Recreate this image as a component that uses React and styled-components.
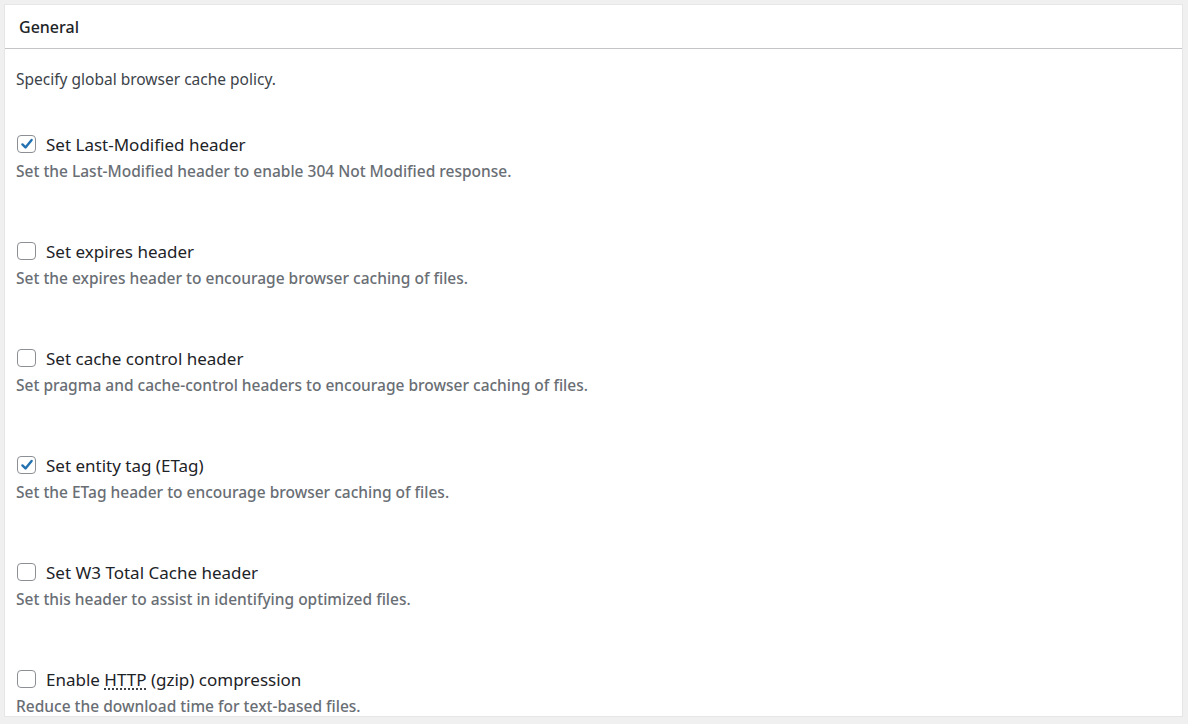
import React from "react";
import styled, { createGlobalStyle } from "styled-components";

const Global = createGlobalStyle`
  html, body {
    margin: 0;
    background: #f0f0f1;
  }
  body {
    font-family: "Noto Sans", "Open Sans", sans-serif;
  }
`;

const Page = styled.div`
  box-sizing: border-box;
  height: 724px;
  padding: 4px 5px 7px 4px;
`;

const Panel = styled.section`
  box-sizing: border-box;
  height: 100%;
  background: #fff;
  border: 1px solid #e6e6e6;
  overflow: hidden;
`;

const Header = styled.h2`
  box-sizing: border-box;
  margin: 0;
  height: 44px;
  padding: 0 0 0 14px;
  display: flex;
  align-items: center;
  font-size: 16px;
  font-weight: 500;
  color: #1d2327;
  border-bottom: 1px solid #c3c4c7;
`;

const Body = styled.div`
  padding: 20px 11px 0 11px;
`;

const Intro = styled.p`
  margin: 0 0 43px;
  font-size: 15.5px;
  line-height: 20px;
  color: #3c434a;
`;

const Option = styled.div`
  margin-bottom: 58px;
`;

const Label = styled.label`
  display: flex;
  align-items: center;
  gap: 10px;
  height: 24px;
  font-size: 17px;
  color: #1d2327;
`;

const Box = styled.span`
  box-sizing: border-box;
  width: 19px;
  height: 18px;
  border: 1px solid #8c8f94;
  border-radius: 4px;
  display: flex;
  align-items: center;
  justify-content: center;
  background: #fff;
  margin-left: 1px;
`;

const Desc = styled.p`
  margin: 5px 0 0;
  font-size: 15.5px;
  font-weight: 500;
  line-height: 20px;
  color: #696e74;
`;

const Abbr = styled.abbr`
  text-decoration: underline dotted;
  text-underline-offset: 3px;
`;

const Check = () => (
  <svg width="14" height="14" viewBox="0 0 14 14">
    <path d="M2.4 7.4 L5.5 10.4 L11.6 3" fill="none" stroke="#2271b1" strokeWidth="2.4" strokeLinecap="round" strokeLinejoin="round" />
  </svg>
);

const options = [
  { label: "Set Last-Modified header", desc: "Set the Last-Modified header to enable 304 Not Modified response.", checked: true },
  { label: "Set expires header", desc: "Set the expires header to encourage browser caching of files." },
  { label: "Set cache control header", desc: "Set pragma and cache-control headers to encourage browser caching of files." },
  { label: "Set entity tag (ETag)", desc: "Set the ETag header to encourage browser caching of files.", checked: true },
  { label: "Set W3 Total Cache header", desc: "Set this header to assist in identifying optimized files." },
  {
    label: (
      <>
        Enable <Abbr title="Hypertext Transfer Protocol">HTTP</Abbr> (gzip) compression
      </>
    ),
    desc: "Reduce the download time for text-based files.",
  },
];

const App = () => (
  <Page>
    <Global />
    <Panel>
      <Header>General</Header>
      <Body>
        <Intro>Specify global browser cache policy.</Intro>
        {options.map((o, i) => (
          <Option key={i}>
            <Label>
              <Box>{o.checked && <Check />}</Box>
              <span>{o.label}</span>
            </Label>
            <Desc>{o.desc}</Desc>
          </Option>
        ))}
      </Body>
    </Panel>
  </Page>
);

export default App;
